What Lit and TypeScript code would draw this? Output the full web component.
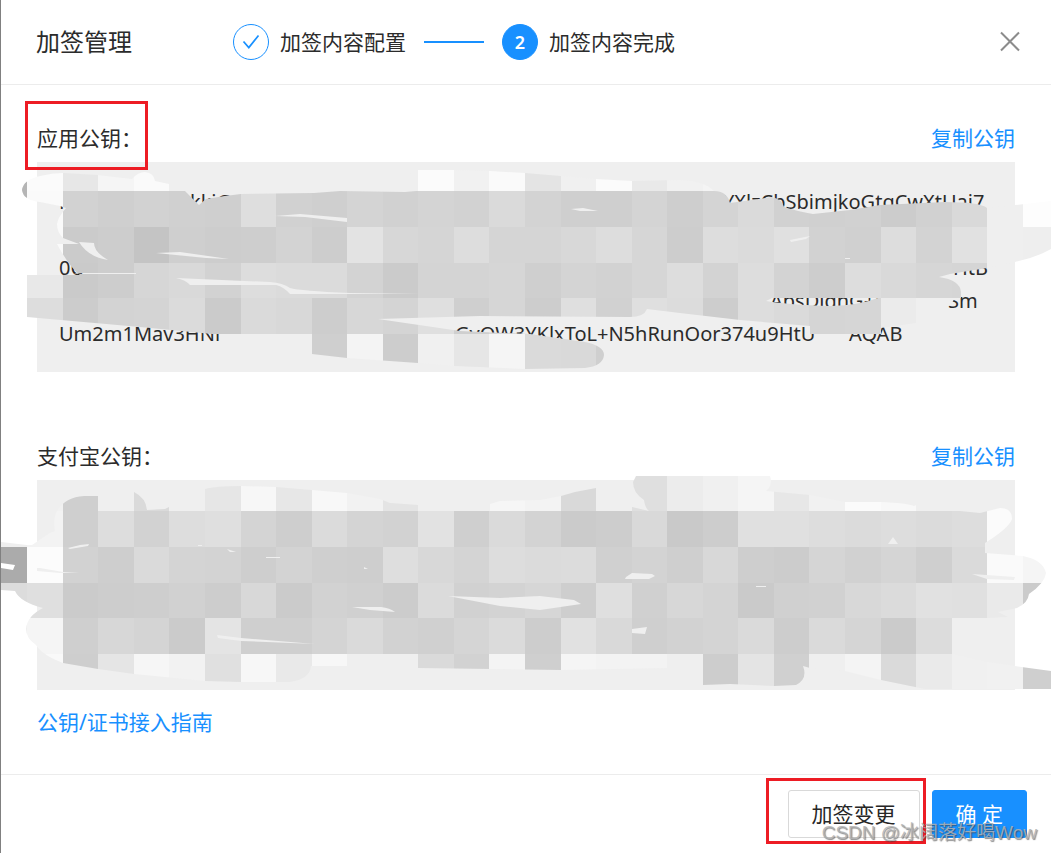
import { LitElement, html, svg, css } from 'lit';
import { customElement, property } from 'lit/decorators.js';

type Fragment = { slot: number; text: string };

interface Mosaic {
  top: number;
  firstRow: number;
  rows: string[];
  outline: string;
  holes: string;
  edge?: string;
}

const CELL = 35.556;
const columnX = (i: number) => Math.round(27.25 + CELL * i);

// Grey level of each tile, left to right, starting one column before x = 27.
const APP_MOSAIC: Mosaic = {
  top: 162,
  firstRow: 155.9,
  rows: [
    'b5 fb e7 f5 fa ef ef ef ef ef ef ef fb f1 fa e4 f0 fb e9 f1 f4 ef ef ef ef ef ef ef ef ef',
    'b5 fa d2 cf d2 d0 cf de d1 cf d4 d1 d4 d2 da d3 cf cf d4 ce d4 da d1 d0 d1 cc d1 d9 ef fd',
    'ef fa cb cd c4 cf cd ce d3 cd e3 d7 d5 dd d5 d5 d8 dd d6 cd dd db e0 d2 d0 dd d3 e1 ef ee',
    'ef e8 ca cd d6 d9 d2 dd db db d3 cb d4 d4 d6 cf d4 d2 d6 dd d3 dd d3 cd dd d9 d6 d5 ef ef',
    'ef dd cc d3 d4 db cb da d8 cd d7 d4 df cf d6 cd df d1 df dc cd dd da d5 d6 eb ef ef ef ef',
    'ef ef ef ef ef ef ef ef ef cf f4 cd f0 e6 f5 da d9 cf ef ef ef ef ef ef ef ef ef ef ef ef',
  ],
  outline:
    'M22 190Q23 180 40 176Q52 173 63 173L98 175L132 179Q138 172 145 172Q154 173 155 181L169 184V191H185L190 196L199 205L206 199Q222 196 241 194L314 193L340 191L405 192L416 191Q407 188 407 181Q408 171 418 170H454L490 171L525 173L561 176L596 179L632 181L680 180Q704 181 714 191Q727 191 730 203L772 197Q782 199 784 207Q800 212 813 214L850 210L880 205L945 202Q980 202 987 208L1015 205L1051 201V249Q1035 258 1015 262L987 268L950 274L939 277Q960 280 961 292V298Q952 298 952 304H916V323L881 328V334H810V326L740 320L680 313L647 309Q644 317 630 317L480 316L378 319L460 331L530 334L585 342Q604 346 604 355Q603 366 585 368L525 369L454 366L418 363L347 358L312 354V334H212L140 327L27 317V275H80Q70 268 57 244H79L63 238Q57 232 57 224Q58 217 66 208L60 206L40 202Q23 200 22 190Z',
  holes:
    'M79 242Q88 257 108 260Q94 252 94 243Z M74 273H136V274H77Z M176 278L270 282Q283 283 290 288Q300 291 350 293L420 294H290Q284 287 276 285H190Q186 280 176 278Z M156 253L180 252L229 259L206 258Z M275 216L300 214L347 218V222L305 217Z M571 209L583 208L598 211H580Z M766 301L772 298H878Q860 305 830 306Q790 305 766 301Z M790 240L810 236L806 239L791 242Z M845 258H850V259H845Z',
  edge: 'M0 276H1V313H0Z',
};

const ALIPAY_MOSAIC: Mosaic = {
  top: 480,
  firstRow: 475.9,
  rows: [
    'ef f1 cf ef da dd e6 f7 e7 f8 f2 e4 ef ef f6 f3 d9 f0 df ec f0 f5 e7 f1 fb f8 ef ef fb ef',
    'ef f3 cf dd d2 dd df d4 ce db d4 d2 e2 cf da d3 cb cd d9 c9 cd e0 e0 dd db dd db dd fb ef',
    'ab fc d2 ce da d4 d3 ce d3 cf ce de d8 d4 dd db dc d0 d3 cf d8 ce cc d5 d1 d5 cf da fa f5',
    'dc df cb cd ce d1 cd d8 cb d2 d0 cc db d1 d3 d6 ce df d0 d7 d4 ca d0 d1 d8 db e1 e0 ea cb',
    'ef f5 cf d7 d4 cb e4 cf cf d4 da d2 d0 d5 db cd e1 d9 cf d2 d4 da cd da d5 cb dc ef ef ef',
    'ef f9 ce e5 f6 f2 e0 f7 e9 f7 ef ef da d2 f4 cf f5 f3 f3 ef cd e4 d0 ef f4 da ea f0 f1 cf',
  ],
  outline:
    'M0 542L27 545H32L50 533L55 531Q53 520 56 513Q64 497 84 496L98 496L134 492Q146 498 147 510L165 509L169 507V511H205V489Q215 486 241 486L276 487L347 493L380 499L390 503L418 505V511H490V504L500 501L540 500L561 496L575 492L596 488V511H632V507L649 511Q645 508 644 500Q633 493 633 482L636 476H770Q773 485 766 491L810 495L845 502L880 502Q907 503 914 506L916 505V511H960L980 513L1000 508Q1012 508 1012 519Q1009 528 985 543V553L1023 556Q1043 560 1046 573Q1045 583 1029 594Q1028 603 1017 608L998 612L1008 617L987 618H952V654L987 662L1015 666L1051 671V689H925L881 680L845 671L810 668L803 666Q808 679 796 685L774 686L730 684L703 685H667V668L561 670L418 668V666H311Q310 679 290 682H241L205 681L134 674L98 669L63 663Q42 655 36 645Q26 638 26 629Q27 616 43 608Q20 602 15 591L0 590Z',
  holes:
    'M68 548L80 545L89 544L88 546L70 549Z M37 568H40L63 572L79 573L60 573L37 571Z M217 635L241 638L315 644L241 641L218 638Z M198 545H202V546H198Z M364 567L368 569H364Z M352 607H381Q390 608 395 612L370 610Z M448 596L500 598L540 596L574 600L581 604L540 610L500 606Z M626 577L632 573L652 574L655 576L649 579L625 579Z M632 629L647 627L645 634L632 633Z M888 544L893 537L898 544Z M972 574L1015 577L1014 580L987 579Z M756 586H766V587H756Z M227 549L236 552H230Z M266 557H280V558H266Z',
  edge: 'M1 563L15 565L13 570L1 568Z',
};

// Each fragment fills a slot; the unreadable stretch after it is the rest of the slot.
const APP_KEY: Fragment[][] = [
  [
    { slot: 131, text: 'MI' },
    { slot: 533, text: 'kkiG9w0B' },
    { slot: 270, text: 'YXlzCbSbimjkoGtqCwXtUai7' },
  ],
  [],
  [
    { slot: 894, text: '0C' },
    { slot: 40, text: 'HtB' },
  ],
  [
    { slot: 711, text: '' },
    { slot: 178, text: 'AbsDlghG+8' },
    { slot: 40, text: 'Sm' },
  ],
  [
    { slot: 396, text: 'Um2m1Mav3HNl' },
    { slot: 394, text: 'GyOW3YKlxToL+N5hRunOor374u9HtU' },
    { slot: 60, text: 'AQAB' },
  ],
];

@customElement('key-mosaic')
class KeyMosaic extends LitElement {
  @property({ attribute: false }) mosaic: Mosaic = APP_MOSAIC;

  static styles = css`
    :host {
      position: absolute;
      top: 0;
      bottom: 0;
      left: -37px;
      right: -36px;
      pointer-events: none;
    }
    .canvas {
      display: block;
      width: 100%;
      height: 100%;
      overflow: visible;
    }
    .tile {
      shape-rendering: crispEdges;
    }
    .shape {
      clip-rule: evenodd;
    }
    .edge {
      fill: #fff;
    }
  `;

  render() {
    const m = this.mosaic;
    return html`<svg class="canvas" viewBox="0 ${m.top} 1051 210" preserveAspectRatio="none" aria-hidden="true">
      <defs><clipPath id="shape"><path class="shape" d=${m.outline + m.holes} /></clipPath></defs>
      <g clip-path="url(#shape)">
        ${m.rows.map((row, r) => {
          const y = Math.round(m.firstRow + CELL * r);
          const next = Math.round(m.firstRow + CELL * (r + 1));
          return row.split(' ').map((grey, i) => {
            const x = columnX(i - 1);
            return svg`<rect class="tile" x=${x} y=${y} width=${columnX(i) - x} height=${next - y} fill=${'#' + grey.repeat(3)} />`;
          });
        })}
      </g>
      <path class="edge" d=${m.edge ?? ''} />
    </svg>`;
  }
}

@customElement('key-section')
class KeySection extends LitElement {
  @property() label = '';
  @property({ type: Boolean }) marked = false;
  @property({ attribute: false }) lines: Fragment[][] = [];
  @property({ attribute: false }) mosaic: Mosaic = APP_MOSAIC;

  static styles = css`
    :host {
      display: block;
    }
    .head {
      display: flex;
      justify-content: space-between;
      margin-bottom: 8px;
      line-height: 32px;
    }
    .label {
      position: relative;
    }
    .mark {
      position: absolute;
      z-index: 2;
      top: -21px;
      bottom: -16px;
      left: -12px;
      width: 117px;
      border: 3px solid #ed1c24;
    }
    .copy {
      color: #1890ff;
      text-decoration: none;
    }
    .box {
      position: relative;
      min-height: 165px;
      padding: 23px 22px 22px;
      background: #efefef;
    }
    .line {
      display: flex;
      height: 33px;
      font-size: 20px;
      line-height: 33px;
      white-space: nowrap;
    }
    .fragment {
      flex: none;
    }
  `;

  render() {
    return html`
      <div class="head">
        <span class="label">${this.label}${this.marked ? html`<i class="mark"></i>` : ''}</span>
        <a class="copy" href="#copy">复制公钥</a>
      </div>
      <div class="box">
        ${this.lines.map(
          (line) => html`<div class="line">
            ${line.map((f) => html`<span class="fragment" style="width:${f.slot}px">${f.text}</span>`)}
          </div>`,
        )}
        <key-mosaic .mosaic=${this.mosaic}></key-mosaic>
      </div>
    `;
  }
}

@customElement('app-root')
class AppRoot extends LitElement {
  static styles = css`
    :host {
      display: block;
      position: relative;
      overflow: hidden;
      border-left: 1px solid #808080;
      background: #fff;
      color: #2b2b2b;
      font: 21px/32px 'Noto Sans', 'Noto Sans CJK SC', sans-serif;
    }
    .header {
      display: flex;
      align-items: center;
      height: 84px;
      padding: 0 30px 0 35px;
      border-bottom: 1px solid #ececec;
    }
    .title {
      margin: 0 101px 0 0;
      font-size: 24px;
      font-weight: 400;
    }
    .steps {
      display: flex;
      flex: 1;
      align-items: center;
      margin: 0;
      padding: 0;
      list-style: none;
    }
    .step {
      display: flex;
      align-items: center;
      gap: 11px;
    }
    .dot {
      display: grid;
      place-items: center;
      box-sizing: border-box;
      width: 36px;
      height: 36px;
      border: 1px solid #1890ff;
      border-radius: 50%;
    }
    .current {
      background: #1890ff;
      color: #fff;
      font-size: 18px;
      font-weight: 600;
    }
    .bar {
      width: 60px;
      height: 2px;
      margin: 0 18px;
      background: #1890ff;
    }
    .close {
      display: flex;
      padding: 0;
      border: 0;
      background: none;
    }
    .body {
      display: flex;
      flex-direction: column;
      padding: 37px 36px 36px;
    }
    .second {
      margin-top: 68px;
    }
    .guide {
      align-self: flex-start;
      margin-top: 16px;
      color: #1890ff;
      text-decoration: none;
    }
    .footer {
      display: flex;
      justify-content: flex-end;
      gap: 12px;
      padding: 15px 24px;
      border-top: 1px solid #ececec;
    }
    .button {
      position: relative;
      height: 48px;
      padding: 0 23px;
      border: 1px solid #d9d9d9;
      border-radius: 3px;
      background: #fff;
      color: #262626;
      font: inherit;
    }
    .primary {
      border-color: #1890ff;
      background: #1890ff;
      color: #fff;
    }
    .mark {
      position: absolute;
      top: -13px;
      right: -7px;
      bottom: -7px;
      left: -23px;
      border: 3px solid #ed1c24;
    }
    .watermark {
      position: absolute;
      right: 14px;
      bottom: 4px;
      color: rgba(178, 178, 178, 0.85);
      font: 19px/32px 'Liberation Sans', 'Noto Sans CJK SC', sans-serif;
      text-shadow: 1px 1px 1px rgba(60, 60, 60, 0.6);
    }
  `;

  render() {
    return html`
      <header class="header">
        <h1 class="title">加签管理</h1>
        <ol class="steps">
          <li class="step">
            <span class="dot">
              <svg width="18" height="16" viewBox="0 0 18 16" fill="none" stroke="#1890ff" stroke-width="1.7">
                <path d="M1.5 7.5L6.8 13.6L16.5 1.5" />
              </svg>
            </span>
            <span>加签内容配置</span>
          </li>
          <li class="bar" role="presentation"></li>
          <li class="step" aria-current="step">
            <span class="dot current">2</span>
            <span>加签内容完成</span>
          </li>
        </ol>
        <button class="close" type="button" aria-label="关闭">
          <svg width="22" height="22" viewBox="0 0 22 22" fill="none" stroke="#8c8c8c" stroke-width="2">
            <path d="M2 1.5L20 19.5M20 1.5L2 19.5" />
          </svg>
        </button>
      </header>
      <main class="body">
        <key-section label="应用公钥：" marked .lines=${APP_KEY} .mosaic=${APP_MOSAIC}></key-section>
        <key-section class="second" label="支付宝公钥：" .mosaic=${ALIPAY_MOSAIC}></key-section>
        <a class="guide" href="#guide">公钥/证书接入指南</a>
      </main>
      <footer class="footer">
        <button class="button" type="button">加签变更<i class="mark"></i></button>
        <button class="button primary" type="button">确 定</button>
      </footer>
      <div class="watermark">CSDN @冰阔落好喝Wow</div>
    `;
  }
}
